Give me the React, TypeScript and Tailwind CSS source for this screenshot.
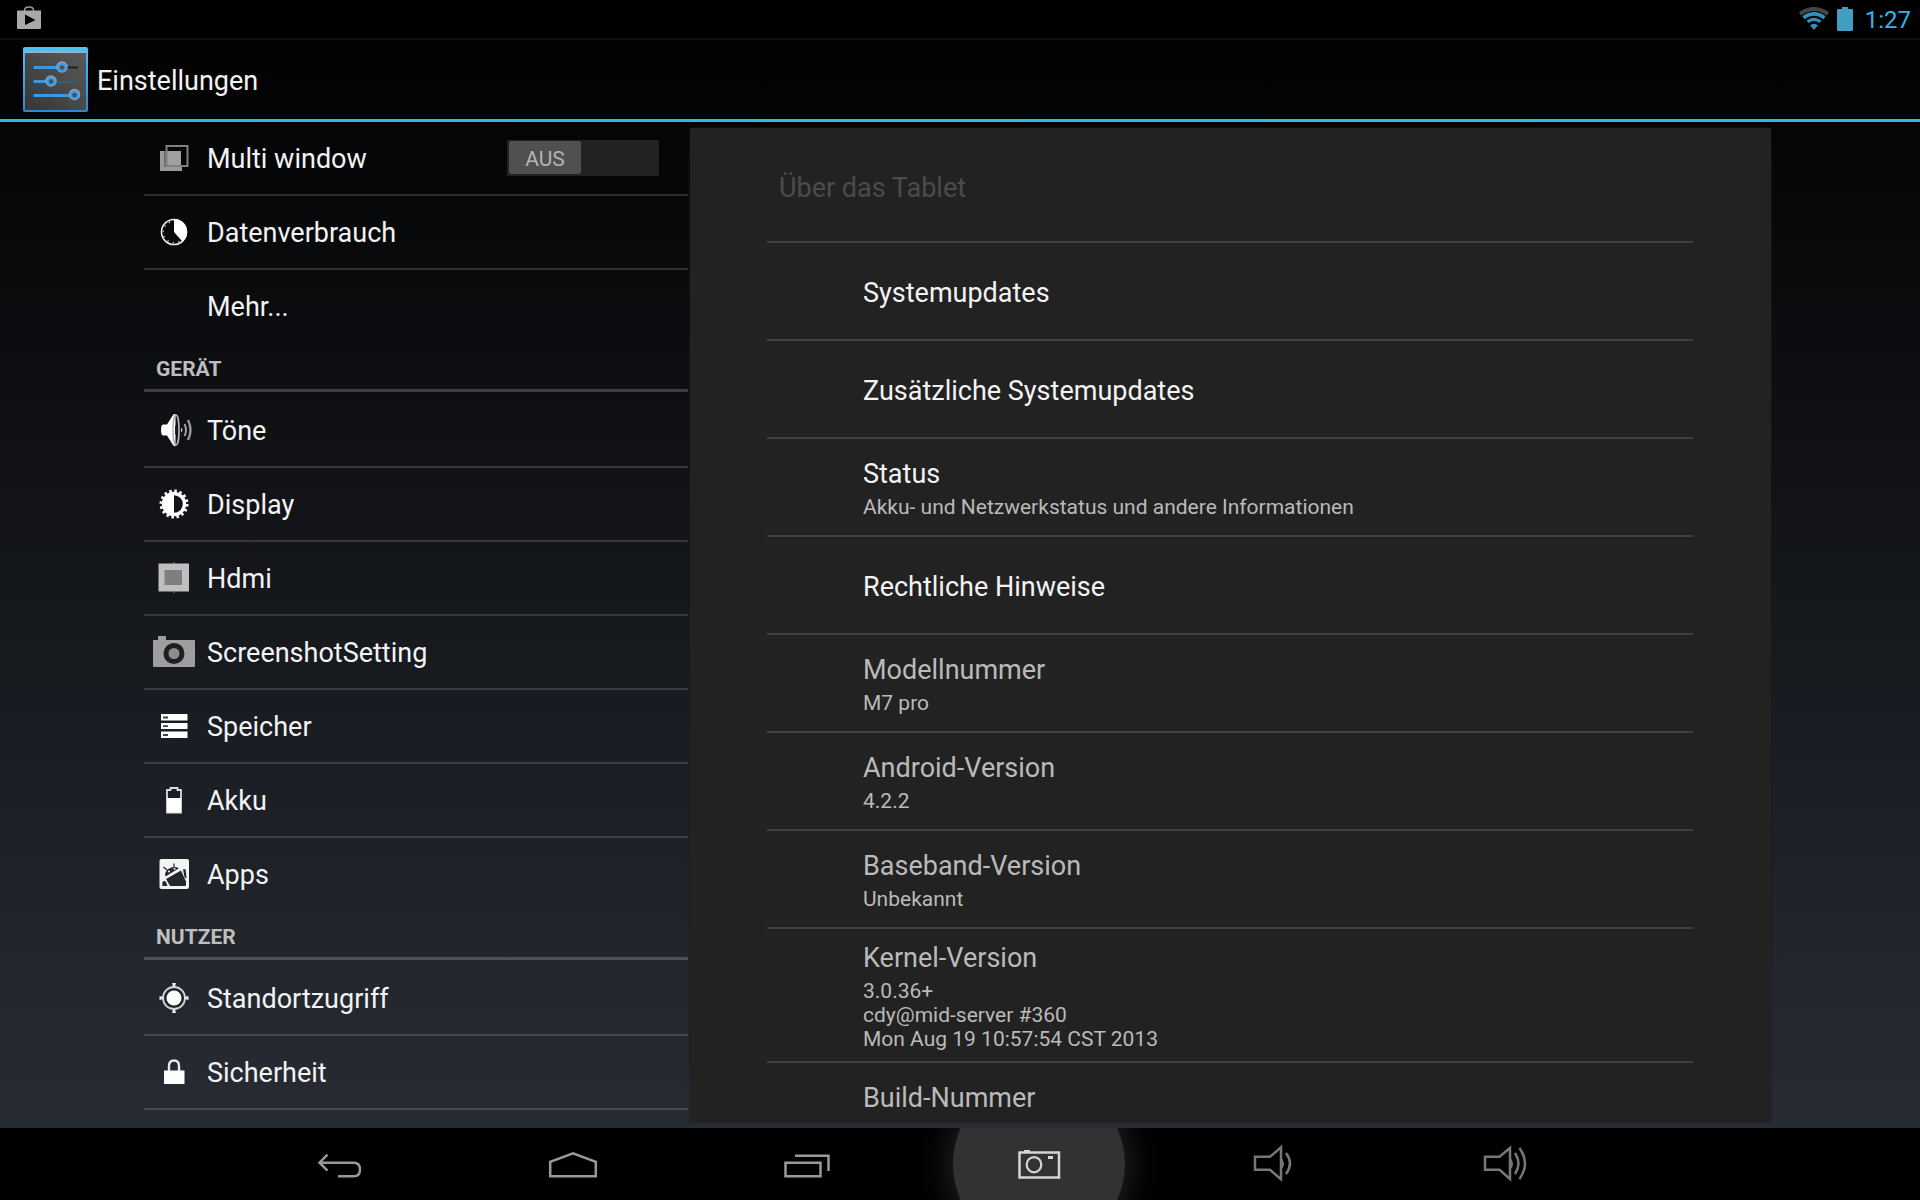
import React, { useState } from 'react';
import clsx from 'clsx';

interface IconProps {
  children: React.ReactNode;
}

interface SettingsEntry {
  label: string;
  icon?: React.ReactNode;
}

interface InfoEntry {
  title: string;
  summary?: string[];
  readOnly?: boolean;
}

const RowIcon = ({ children }: IconProps) => (
  <svg className="size-12" viewBox="0 0 48 48" fill="none" aria-hidden="true">
    {children}
  </svg>
);

const NavIcon = ({ children }: IconProps) => (
  <svg className="relative h-12 w-14" viewBox="0 0 56 48" fill="none" aria-hidden="true">
    {children}
  </svg>
);

const MultiWindowIcon = () => (
  <RowIcon>
    <path d="M10 17h4v16h18v4H10z" fill="#9a9a9a" />
    <path d="M14 17h2v16h-2z" fill="#6a6a6a" />
    <path d="M16 17h15v14H16z" fill="#a0a0a0" />
    <path d="M16.5 12h21v20h-21z" stroke="#808080" strokeWidth="2" />
  </RowIcon>
);

const DataUsageIcon = () => (
  <RowIcon>
    <circle cx="24" cy="24" r="12.5" stroke="#e8e8e8" strokeWidth="1.6" />
    <circle cx="24" cy="24" r="10.8" stroke="#d0d0d0" strokeWidth="1.6" strokeDasharray="1.2 4.45" />
    <path d="M24 24V11a13 13 0 0 1 8.5 22.8z" fill="#fff" />
  </RowIcon>
);

const SoundIcon = () => (
  <RowIcon>
    <path d="M13 18.5h4L23 9q1-1.5 2.5-1v32Q24 40.5 23 39l-6-9.5h-4q-2-.5-2-5.500t2-5.500z" fill="#fff" />
    <ellipse cx="26" cy="24" rx="3" ry="15" stroke="#b8b8b8" strokeWidth="1.6" />
    <path d="M25 19q4 5 0 10z" fill="#222" />
    <path d="M31 21.5v5q3-2.5 0-5z" fill="#ccc" />
    <path d="M34.5 18q3 6 0 12" stroke="#aaa" strokeWidth="1.8" />
    <path d="M38 14q5 10 0 20" stroke="#999" strokeWidth="2.4" />
  </RowIcon>
);

const DisplayIcon = () => (
  <RowIcon>
    <circle cx="24" cy="24" r="13" stroke="#fff" strokeWidth="3" strokeDasharray="2.5 2.6" />
    <circle cx="24" cy="24" r="10.5" stroke="#fff" strokeWidth="3.4" />
    <path d="M24 13a11 11 0 0 0 0 22z" fill="#fff" />
  </RowIcon>
);

const HdmiIcon = () => (
  <RowIcon>
    <path d="M8.500 9.500h30.500v28H8.500z" fill="#bfbfbf" />
    <path d="M23 8.500h2v1h-2zM23 37.500h2v1h-2z" fill="#8a8a8a" />
    <path d="M14.500 16h17.500v15H14.500z" fill="#7f7f7f" />
  </RowIcon>
);

const ScreenshotIcon = () => (
  <RowIcon>
    <path d="M4 12h4V9q0-1 1-1h6q1 0 1 1v3h28q1 0 1 1v25q0 1-1 1H4q-1 0-1-1V13q0-1 1-1z" fill="#a09da0" />
    <circle cx="24" cy="25.5" r="8" fill="#8b8e89" stroke="#1c2023" strokeWidth="5" />
  </RowIcon>
);

const StorageIcon = () => (
  <RowIcon>
    <path d="M11 12h26.5v6.5H11zM11 21h26.5v6H11zM11 29.5h26.5V36H11z" fill="#fff" />
    <path d="M13 15.500h5M13 24.200h5M13 33h5" stroke="#444" strokeWidth="1.8" />
  </RowIcon>
);

const BatteryIcon = () => (
  <RowIcon>
    <path d="M17 14h3.500v-2h7v2H31v22.500H17z" stroke="#ddd" strokeWidth="1.8" />
    <path d="M17 22h14v14.500H17z" fill="#fff" />
  </RowIcon>
);

const AppsIcon = () => (
  <RowIcon>
    <rect x="9.5" y="9" width="29.5" height="30" rx="2" fill="#f4f4f4" />
    <path d="M15.500 26.500q-1.500-4 2.500-7.200 5.500-3.800 11-1z" fill="#23282d" />
    <path d="M17 20l-3.500-3M24 17.500V13.500" stroke="#23282d" strokeWidth="1.2" />
    <circle cx="19" cy="21.500" r="1" fill="#fff" />
    <circle cx="24.500" cy="18.800" r="1" fill="#fff" />
    <path d="M16 29l15-8.500 5 11v3.500q0 1-1 1H21q-1 0-1.500-1z" fill="#23282d" />
    <path d="M33 19.500q2-1 2.700.5l.8 8q-1.500.5-2-1zM12.500 32q2-2 3.500 0l1.500 4h-5q-.5-2 0-4z" fill="#23282d" />
  </RowIcon>
);

const LocationIcon = () => (
  <RowIcon>
    <circle cx="24" cy="24" r="7.5" fill="#fff" />
    <circle cx="24" cy="24" r="11" stroke="#d5d5d5" strokeWidth="1.8" />
    <path d="M22 9h4l-1 4h-2zM22 39h4l-1-4h-2zM9.5 22v4l4-1v-2zM38.5 22v4l-4-1v-2z" fill="#e8e8e8" />
  </RowIcon>
);

const LockIcon = () => (
  <RowIcon>
    <path d="M19 23v-5q0-5.500 5-5.500t5 5.500v5" stroke="#e8e8e8" strokeWidth="2.4" />
    <path d="M14 22.500h20.500V36H14z" fill="#fff" />
  </RowIcon>
);

const SettingsLogo = () => (
  <svg className="size-[66px]" viewBox="0 0 66 66" fill="none" aria-hidden="true">
    <defs>
      <linearGradient id="frame" x1="0" y1="0" x2="0" y2="1">
        <stop offset="0" stopColor="#4cc3f5" />
        <stop offset="1" stopColor="#2f86d6" />
      </linearGradient>
      <linearGradient id="plate" x1="1" y1="0" x2="0" y2="1">
        <stop offset="0" stopColor="#5a5a5a" />
        <stop offset="1" stopColor="#363636" />
      </linearGradient>
    </defs>
    <rect x="0" y="0" width="65" height="65" rx="2" fill="url(#frame)" />
    <path d="M2 5h61v58H2z" fill="url(#plate)" />
    <path d="M2 4.500h61v1.500H2z" fill="#9ab4c4" />
    <path d="M44 20.500h11" stroke="#16222c" strokeWidth="2" />
    <path d="M34 35h21" stroke="#2d5f86" strokeWidth="2" />
    <path d="M10.500 20.500H36M10.500 34.500H24M10.500 48.500H47" stroke="#3c97e0" strokeWidth="3" />
    <g fill="#43525e" stroke="#8fa3b5" strokeWidth="2">
      <circle cx="39" cy="20" r="4.8" />
      <circle cx="28" cy="34" r="4.8" />
      <circle cx="51.5" cy="47.5" r="4.8" />
    </g>
    <g stroke="#3c9bea" strokeWidth="2.4">
      <circle cx="39" cy="20.5" r="3.5" />
      <circle cx="28" cy="34.5" r="3.5" />
      <circle cx="51.5" cy="48" r="3.5" />
    </g>
  </svg>
);

const StatusBar = () => (
  <div className="flex h-10 shrink-0 items-center justify-between border-b-2 border-[#0e0e0e] bg-black pl-4 pr-[9px]">
    <svg className="h-8 w-7" viewBox="0 0 28 32" fill="none" aria-hidden="true">
      <path d="M8.500 9V7.500Q8.500 4 13 4t4.500 3.500V9" stroke="#9a9a9a" strokeWidth="1.5" />
      <path d="M1 7.500h24V25q0 1-1 1H2q-1 0-1-1z" fill="#a9a9a9" />
      <path d="M9 11.500l10.500 5.500L9 22z" fill="#000" />
    </svg>
    <div className="flex items-center">
      <svg className="h-6 w-[30px]" viewBox="0 0 30 24" fill="none" aria-hidden="true">
        <path d="M1 7q14-10 28 0" stroke="#444" strokeWidth="4" />
        <path d="M4.500 10.700q10.500-7.500 21 0" stroke="#2d93bd" strokeWidth="3.6" />
        <path d="M8.500 14.700q6.500-4.500 13 0" stroke="#2d93bd" strokeWidth="3.2" />
        <path d="M11 18.300q4-3 8 0L15 23z" fill="#2d93bd" />
      </svg>
      <svg className="ml-2 h-6 w-4" viewBox="0 0 16 24" aria-hidden="true">
        <path d="M5 0h6v2h4q1 0 1 1v20q0 1-1 1H1q-1 0-1-1V3q0-1 1-1h4z" fill="#429dc3" />
      </svg>
      <time className="ml-3 pt-[2px] text-2xl text-[#33b5e5]">1:27</time>
    </div>
  </div>
);

const SettingsRow = ({ label, icon }: SettingsEntry) => (
  <a href="#" className="flex h-[72px] items-center gap-[9px] pl-[6px]">
    <span className="size-12 shrink-0">{icon}</span>
    <span className="pt-[2px] text-[27px] leading-8 text-[#f3f3f3]">{label}</span>
  </a>
);

const SettingsSection = ({ title, entries, last }: { title: string; entries: SettingsEntry[]; last?: boolean }) => (
  <section>
    <h2 className="mb-[2px] flex h-[50px] items-end border-b-[3px] border-white/20 pb-2 pl-3 text-[21px] leading-6 font-bold text-[#bebebe]">
      {title}
    </h2>
    <ul className={clsx('divide-y-2 divide-white/15', last && 'border-b-2 border-white/15')}>
      {entries.map((entry) => (
        <li key={entry.label}>
          <SettingsRow {...entry} />
        </li>
      ))}
    </ul>
  </section>
);

const MultiWindowRow = () => {
  const [enabled, setEnabled] = useState(false);

  return (
    <label className="flex h-[72px] items-center gap-[9px] pl-[6px] pr-[29px]">
      <MultiWindowIcon />
      <span className="grow pt-[2px] text-[27px] leading-8 text-[#f3f3f3]">Multi window</span>
      <input
        type="checkbox"
        role="switch"
        className="sr-only"
        checked={enabled}
        onChange={(e) => setEnabled(e.target.checked)}
      />
      <span className={clsx('flex h-9 w-[152px] bg-[#212222] px-[2px] pt-px pb-[2px]', enabled && 'justify-end')}>
        <span className="flex w-[72px] items-center justify-center rounded-[2px] bg-[#505050] pt-[2px] text-[21px] leading-6 text-[#b5b5b5]">
          {enabled ? 'AN' : 'AUS'}
        </span>
      </span>
    </label>
  );
};

const deviceEntries: SettingsEntry[] = [
  { label: 'Töne', icon: <SoundIcon /> },
  { label: 'Display', icon: <DisplayIcon /> },
  { label: 'Hdmi', icon: <HdmiIcon /> },
  { label: 'ScreenshotSetting', icon: <ScreenshotIcon /> },
  { label: 'Speicher', icon: <StorageIcon /> },
  { label: 'Akku', icon: <BatteryIcon /> },
  { label: 'Apps', icon: <AppsIcon /> },
];

const userEntries: SettingsEntry[] = [
  { label: 'Standortzugriff', icon: <LocationIcon /> },
  { label: 'Sicherheit', icon: <LockIcon /> },
];

const infoEntries: InfoEntry[] = [
  { title: 'Systemupdates' },
  { title: 'Zusätzliche Systemupdates' },
  { title: 'Status', summary: ['Akku- und Netzwerkstatus und andere Informationen'] },
  { title: 'Rechtliche Hinweise' },
  { title: 'Modellnummer', summary: ['M7 pro'], readOnly: true },
  { title: 'Android-Version', summary: ['4.2.2'], readOnly: true },
  { title: 'Baseband-Version', summary: ['Unbekannt'], readOnly: true },
  {
    title: 'Kernel-Version',
    summary: ['3.0.36+', 'cdy@mid-server #360', 'Mon Aug 19 10:57:54 CST 2013'],
    readOnly: true,
  },
];

const AboutPanel = () => (
  <main className="mt-[6px] mr-[5px] mb-[6px] ml-[2px] overflow-hidden rounded-[2px] bg-[#222] pr-[78px] pl-[77px] shadow-[0_0_3px_#1a1a1a]">
    <h2 className="flex h-[113px] items-center pt-[6px] pl-3 text-[27px] leading-8 text-[#4b4b4b]">Über das Tablet</h2>
    <ul>
      {infoEntries.map(({ title, summary, readOnly }) => (
        <li
          key={title}
          className="flex min-h-[98px] flex-col justify-center border-t-2 border-[#404040] pt-[13px] pb-[10px] pl-24"
        >
          <h3 className={clsx('text-[27px] leading-8', readOnly ? 'text-[#bababa]' : 'text-[#f3f3f3]')}>{title}</h3>
          {summary && (
            <div className="mt-[5px] text-[21px] leading-6 text-[#bababa]">
              {summary.map((line) => (
                <p key={line}>{line}</p>
              ))}
            </div>
          )}
        </li>
      ))}
      <li className="border-t-2 border-[#404040] pt-[19px] pl-24">
        <h3 className="text-[27px] leading-8 text-[#bababa]">Build-Nummer</h3>
      </li>
    </ul>
  </main>
);

const navButtonClass = 'relative flex flex-1 items-center justify-center';

const NavigationBar = () => (
  <nav className="flex h-[72px] shrink-0 overflow-hidden bg-black pr-[299px] pl-[223px]">
    <button type="button" aria-label="Zurück" className={navButtonClass}>
      <NavIcon>
        <path d="M15.500 14.700l-8 8 8 8M8 22.700h33.500q6.500 0 6.500 6.800t-6.500 6.800H26" stroke="#999" strokeWidth="2.5" />
      </NavIcon>
    </button>
    <button type="button" aria-label="Startseite" className={navButtonClass}>
      <NavIcon>
        <path d="M5.200 36.300V21.800L28 13.300l22.800 8.500v14.500z" stroke="#999" strokeWidth="2.5" />
      </NavIcon>
    </button>
    <button type="button" aria-label="Letzte Apps" className={navButtonClass}>
      <NavIcon>
        <path d="M7.500 22.700h35v13.600h-35zM17 15.700h33.500V31" stroke="#999" strokeWidth="2.5" />
      </NavIcon>
    </button>
    <button type="button" aria-label="Screenshot" className={navButtonClass}>
      <span className="absolute size-[172px] rounded-full bg-[#323232] shadow-[0_0_36px_#2c2c2c]" />
      <NavIcon>
        <path d="M8.500 12.500h39.500v25H8.500z" stroke="#d5d5d5" strokeWidth="2.5" />
        <path d="M13 10h6v2h-6zM37 16h5v3h-5z" fill="#d5d5d5" />
        <ellipse cx="23" cy="24.700" rx="7.300" ry="7.600" stroke="#d5d5d5" strokeWidth="2.200" />
      </NavIcon>
    </button>
    <button type="button" aria-label="Leiser" className={navButtonClass}>
      <NavIcon>
        <path d="M11 16.800h15l11-9.500v32l-11-9.500H11z" stroke="#777" strokeWidth="2.5" />
        <path d="M37 17q6 7 0 13z" fill="#777" />
        <path d="M42 13q8 10.500 0 21" stroke="#777" strokeWidth="2.5" />
      </NavIcon>
    </button>
    <button type="button" aria-label="Lauter" className={navButtonClass}>
      <NavIcon>
        <path d="M8 16.800h14.500L33 8v31l-10.500-9.200H8z" stroke="#777" strokeWidth="2.5" />
        <path d="M33 17q6 7 0 13z" fill="#777" />
        <path d="M38 13q7 10.500 0 21M42.500 8q11 15.500 0 31" stroke="#777" strokeWidth="2.5" />
      </NavIcon>
    </button>
  </nav>
);

export default function App() {
  return (
    <div className="flex h-screen flex-col overflow-hidden bg-[linear-gradient(#000,#2a2f38)] font-[Roboto,sans-serif]">
      <StatusBar />
      <header className="flex h-[82px] shrink-0 items-center gap-2 border-b-[3px] border-[#33b5e5] pl-[23px]">
        <SettingsLogo />
        <h1 className="pt-[2px] text-[27px] leading-8 text-[#f3f3f3]">Einstellungen</h1>
      </header>
      <div className="mx-[7.5%] grid min-h-0 grow grid-cols-[1fr_2fr] grid-rows-[minmax(0,1fr)]">
        <aside className="min-w-0 overflow-hidden">
          <ul className="divide-y-2 divide-white/15">
            <li>
              <MultiWindowRow />
            </li>
            <li>
              <SettingsRow label="Datenverbrauch" icon={<DataUsageIcon />} />
            </li>
            <li>
              <SettingsRow label="Mehr..." />
            </li>
          </ul>
          <SettingsSection title="GERÄT" entries={deviceEntries} />
          <SettingsSection title="NUTZER" entries={userEntries} last />
        </aside>
        <AboutPanel />
      </div>
      <NavigationBar />
    </div>
  );
}
